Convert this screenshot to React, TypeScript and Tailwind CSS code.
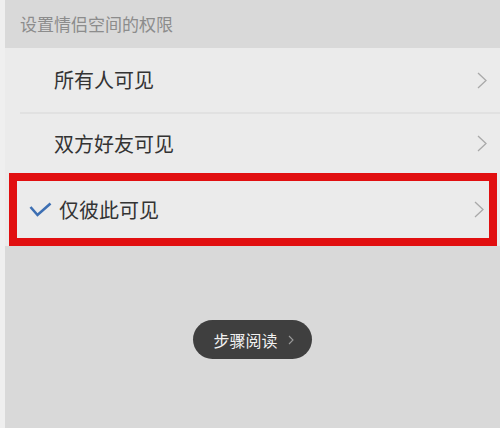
function Chevron({ className = "" }: { className?: string }) {
  return (
    <svg className={className} width="10" height="17" viewBox="0 0 10 17" fill="none">
      <polyline points="1,1 9,8.5 1,16" stroke="#a9a9a9" strokeWidth="1.3" />
    </svg>
  );
}

function Check() {
  return (
    <svg width="23" height="15" viewBox="0 0 23 15" fill="none">
      <polyline points="1.5,5 8.5,13 21.5,1.5" stroke="#3d6fb3" strokeWidth="2.6" />
    </svg>
  );
}

function Row({ label }: { label: string }) {
  return (
    <div className="flex flex-row items-center h-full pl-[49px] pr-[13px]">
      <span className="flex-1 text-[20px] text-[#333333]">{label}</span>
      <Chevron />
    </div>
  );
}

export default function App() {
  return (
    <div
      className="flex flex-row w-[500px] h-[428px] bg-[#efefef]"
      style={{ fontFamily: '"Noto Sans CJK SC", "Noto Sans", sans-serif' }}
    >
      <div className="w-[5px] shrink-0" />
      <div className="flex flex-col flex-1 bg-[#d9d9d9]">
        <div className="flex items-center h-[48px] pl-[15px] text-[17px] text-[#8c8c8c]">
          设置情侣空间的权限
        </div>
        <div className="flex flex-col bg-[#ebebeb]">
          <div className="h-[64px]">
            <Row label="所有人可见" />
          </div>
          <div className="ml-[15px] h-[2px] bg-[#e1e1e1]" />
          <div className="h-[59px]">
            <Row label="双方好友可见" />
          </div>
          <div className="h-[73px] pl-[4px] pr-[3px]">
            <div className="flex flex-row items-center h-full border-8 border-[#e10f10] pl-[12px] pr-[5px]">
              <Check />
              <span className="flex-1 ml-[7px] text-[20px] text-[#333333]">仅彼此可见</span>
              <Chevron />
            </div>
          </div>
        </div>
        <div className="flex justify-center mt-[74px]">
          <div className="flex flex-row items-center h-[39px] pl-[20px] pr-[18px] rounded-full bg-[#3f3f3f]">
            <span className="text-[16px] text-[#f2f2f2]">步骤阅读</span>
            <svg className="ml-[10px]" width="6" height="10" viewBox="0 0 6 10" fill="none">
              <polyline points="1,1 5,5 1,9" stroke="#9a9a9a" strokeWidth="1.1" />
            </svg>
          </div>
        </div>
      </div>
    </div>
  );
}
